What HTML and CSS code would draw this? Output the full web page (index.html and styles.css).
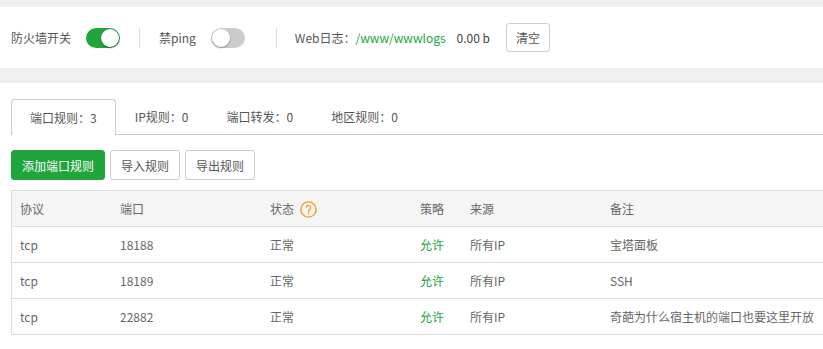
FILE: index.html
```html
<!DOCTYPE html>
<html lang="zh-CN">
<head>
    <meta charset="UTF-8">
    <meta name="viewport" content="width=device-width, initial-scale=1.0">
    <title>系统防火墙</title>
    <link rel="stylesheet" href="styles.css">
</head>
<body>
    <div class="band band-top"></div>

    <!-- 顶部开关栏 -->
    <div class="toolbar">
        <span class="label">防火墙开关</span>
        <span class="switch on"><span class="knob"></span></span>
        <span class="divider"></span>
        <span class="label">禁ping</span>
        <span class="switch"><span class="knob"></span></span>
        <span class="divider wide"></span>
        <span class="label">Web日志：</span>
        <span class="path">/www/wwwlogs</span>
        <span class="size">0.00 b</span>
        <button class="btn">清空</button>
    </div>

    <div class="band band-mid"></div>

    <div class="content">
        <ul class="tabs">
            <li class="tab active">端口规则：3</li>
            <li class="tab">IP规则：0</li>
            <li class="tab">端口转发：0</li>
            <li class="tab">地区规则：0</li>
        </ul>

        <div class="actions">
            <button class="btn btn-green">添加端口规则</button>
            <button class="btn">导入规则</button>
            <button class="btn">导出规则</button>
        </div>

        <table class="rules">
            <thead>
                <tr>
                    <th class="c-proto">协议</th>
                    <th class="c-port">端口</th>
                    <th class="c-state">状态
                        <svg class="help" width="17" height="17" viewBox="0 0 17 17">
                            <circle cx="8.5" cy="8.5" r="7.6" fill="none" stroke="#f39b22" stroke-width="1.4"/>
                            <path d="M6.3 6.6a2.2 2.2 0 1 1 3.2 2c-.7.4-1 .8-1 1.6v.5" fill="none" stroke="#f39b22" stroke-width="1.3" stroke-linecap="round"/>
                            <circle cx="8.5" cy="12.8" r=".8" fill="#f39b22"/>
                        </svg>
                    </th>
                    <th class="c-policy">策略</th>
                    <th class="c-source">来源</th>
                    <th>备注</th>
                </tr>
            </thead>
            <tbody>
                <tr>
                    <td>tcp</td>
                    <td>18188</td>
                    <td>正常</td>
                    <td class="allow">允许</td>
                    <td>所有IP</td>
                    <td>宝塔面板</td>
                </tr>
                <tr>
                    <td>tcp</td>
                    <td>18189</td>
                    <td>正常</td>
                    <td class="allow">允许</td>
                    <td>所有IP</td>
                    <td>SSH</td>
                </tr>
                <tr>
                    <td>tcp</td>
                    <td>22882</td>
                    <td>正常</td>
                    <td class="allow">允许</td>
                    <td>所有IP</td>
                    <td>奇葩为什么宿主机的端口也要这里开放</td>
                </tr>
            </tbody>
        </table>
    </div>
</body>
</html>
```

FILE: styles.css
```css
/* 宝塔风格防火墙页面 */
body {
    margin: 0;
    background: #fff;
    color: #666;
    font-family: "Noto Sans CJK SC", "Noto Sans", sans-serif;
    font-size: 12px;
    overflow: hidden;
}

.band {
    background: #f0f0f0;
}

.band-top {
    height: 7px;
}

.band-mid {
    height: 15px;
}

/* 顶部开关栏 */
.toolbar {
    height: 61px;
    padding: 0 11px;
    display: flex;
    align-items: center;
}

.label {
    color: #555;
}

.switch {
    position: relative;
    width: 34px;
    height: 20px;
    margin-left: 15px;
    border-radius: 10px;
    background: #ccc;
}

.switch.on {
    background: #20a53a;
}

.knob {
    position: absolute;
    top: 1px;
    left: 1px;
    width: 18px;
    height: 18px;
    border-radius: 50%;
    background: #fff;
    box-shadow: 0 1px 2px rgba(0, 0, 0, 0.35);
}

.switch.on .knob {
    left: 15px;
}

.divider {
    width: 1px;
    height: 20px;
    background: #ddd;
    margin: 0 19px 0 19px;
}

.divider.wide {
    margin: 0 18px 0 31px;
}

.path {
    color: #20a53a;
}

.size {
    color: #444;
    margin-left: 11px;
    margin-right: 16px;
}

.btn {
    height: 30px;
    padding: 0 10px;
    border: 1px solid #ccc;
    border-radius: 3px;
    background: #fff;
    color: #555;
    font-family: inherit;
    font-size: 12px;
    cursor: pointer;
}

.toolbar .btn {
    height: 29px;
    padding: 0 9px;
}

.btn-green {
    background: #20a53a;
    border-color: #20a53a;
    color: #fff;
}

/* 标签页 */
.content {
    padding: 16px 0 0 11px;
}

.tabs {
    list-style: none;
    margin: 0;
    padding: 0;
    display: flex;
    height: 35px;
    border-bottom: 1px solid #cdc8d8;
}

.tab {
    height: 35px;
    line-height: 35px;
    padding: 0 19px;
    color: #555;
}

.tab.active {
    background: #fff;
    border: 1px solid #cdc8d8;
    border-bottom: none;
    border-radius: 4px 4px 0 0;
    height: 35px;
    padding: 0 18px;
}

.actions {
    display: flex;
    gap: 5px;
    margin-top: 15px;
}

/* 规则表格 */
.rules {
    margin-top: 10px;
    width: 100%;
    table-layout: fixed;
    border-collapse: collapse;
    border: 1px solid #ddd;
    border-right: none;
}

.rules th,
.rules td {
    height: 35px;
    padding: 0 8px;
    text-align: left;
    font-weight: normal;
    border-bottom: 1px solid #ddd;
    white-space: nowrap;
    overflow: hidden;
}

.rules th {
    background: #f5f5f5;
    color: #666;
}

.c-proto { width: 84px; }
.c-port { width: 134px; }
.c-state { width: 134px; }
.c-policy { width: 34px; }
.c-source { width: 124px; }

.help {
    vertical-align: -4px;
    margin-left: 3px;
}

.allow {
    color: #20a53a;
}
```
